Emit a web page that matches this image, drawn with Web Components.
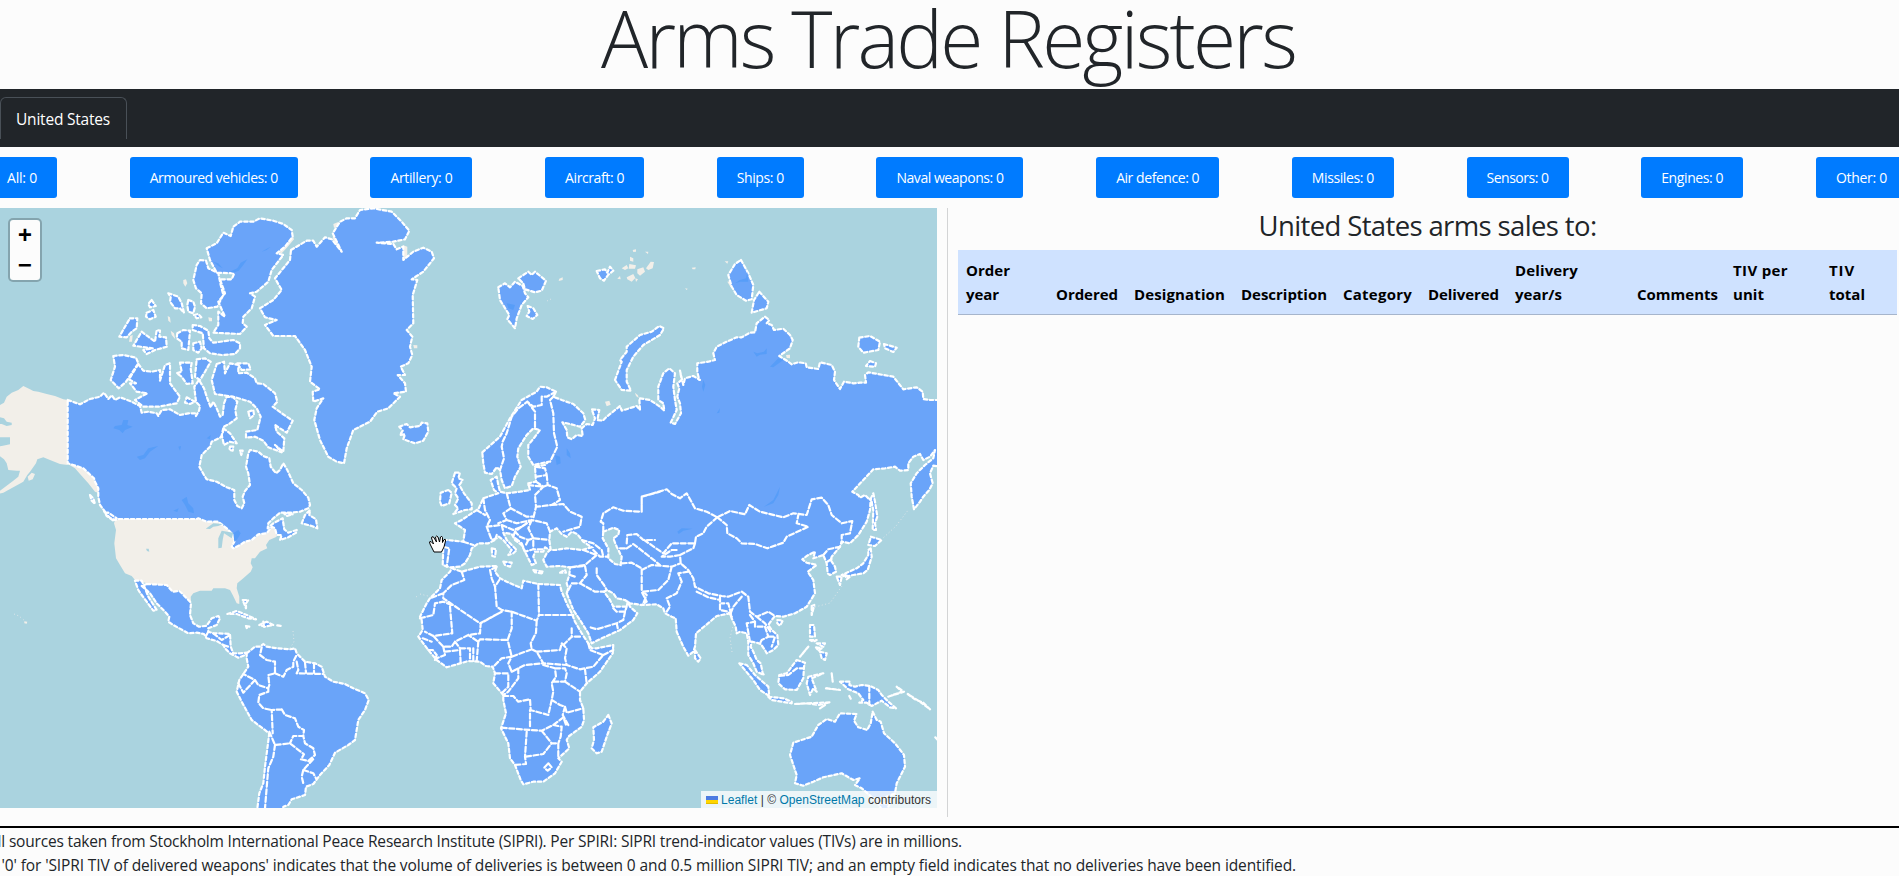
<!DOCTYPE html>
<html lang="en">
<head>
<meta charset="utf-8">
<title>Arms Trade Registers</title>
<style>
html,body{margin:0;height:100%;overflow:hidden;background:#fcfcfc}
body{font-family:"Open Sans","Noto Sans",sans-serif;font-size:16px;line-height:24px;color:#212529}
</style>
</head>
<body>
<arms-app></arms-app>
<script>
const define=(name,html,setup)=>customElements.define(name,class extends HTMLElement{
  constructor(){super();this.attachShadow({mode:'open'}).innerHTML=html;}
  connectedCallback(){if(setup)setup.call(this,this.shadowRoot);}
});

/* One line of text tracked out (or in) to the width given in "w". */
define('fit-text','<style>:host{display:inline-block;white-space:nowrap}span{display:inline-block}</style><span><slot></slot></span>',function(root){
  const s=root.querySelector('span'),w=+this.getAttribute('w'),n=this.textContent.length;
  const have=s.getBoundingClientRect().width;
  s.style.letterSpacing=((w-have)/n).toFixed(3)+'px';
});

define('nav-bar',`<style>:host{display:flex;height:58px;background:#212529;box-sizing:border-box;padding-top:8px}
.tab{box-sizing:border-box;width:127px;height:42px;border:1px solid #495057;border-bottom:0;border-radius:6px 6px 0 0;color:#fff;padding:8px 0 0 15px;font-size:15.5px;line-height:26px}</style>
<div class="tab"><slot></slot></div>`);

define('category-button',`<style>:host{display:block;box-sizing:border-box;height:41px;padding:8px 20px 0;border-radius:3px;background:#007bff;color:#fff;font-size:14px;line-height:26px}</style><slot></slot>`);

define('category-bar',`<style>:host{display:flex;justify-content:space-between;margin:10px -8px 10px -13px}</style><slot></slot>`);

define('zoom-control',`<style>:host{display:block;width:30px;border:2px solid rgba(0,0,0,.22);border-radius:5px;background:#fcfcfc;background-clip:padding-box;color:#000;font:bold 24px/33px "Liberation Mono",monospace;text-align:center}
div{height:30px}div:first-child{border-bottom:1px solid #ccc}</style><div>+</div><div>−</div>`);

define('map-attribution',`<style>:host{display:flex;align-items:center;box-sizing:border-box;height:17px;width:236px;padding-left:5px;background:rgba(255,255,255,.78);color:#333;font:12px/17px "Liberation Sans",Arial,sans-serif;white-space:nowrap}
a{color:#0078a8}svg{margin-right:3px}fit-text{padding-top:1px}</style><svg width="12" height="8"><path fill="#4c7be1" d="M0 0h12v4H0z"/><path fill="#ffd500" d="M0 4h12v3H0z"/><path fill="#e0bc00" d="M0 7h12v1H0z"/></svg><fit-text w="210"><a>Leaflet</a> | © <a>OpenStreetMap</a> contributors</fit-text>`);

/* Map sheets: letter = sheet origin; coordinates on a sheet are in thirds of a pixel. */
const SHEET={C:[0,200],D:[180,200],E:[400,200],F:[640,200],G:[0,480],H:[400,460],I:[400,600],J:[640,460],K:[640,640]};
const toPath=(line,close)=>{
  let o=[0,0],pts=[];
  for(const t of line.trim().split(/\s+/)){
    if(SHEET[t]){o=SHEET[t];continue;}
    const [x,y]=t.split(',').map(Number);
    pts.push((o[0]+x/3).toFixed(1)+' '+(o[1]+y/3).toFixed(1));
  }
  return 'M'+pts.join('L')+(close?'Z':'');
};
const paths=(text,close)=>text.trim().split('\n').map(l=>toPath(l,close)).join('');

const PLAIN=`
C 203,600 190,598 165,588 140,582 115,575 100,573 90,568 70,558 55,570 35,578 20,590 12,608 0,615 -5,650 12,655 20,665 35,668 35,675 20,678 5,672 -5,672 -5,712 30,712 30,733 5,738 -5,740 -5,765 12,778 20,790 25,810 50,812 60,812 55,830 40,842 0,872 -5,882 10,878 40,862 70,845 82,825 90,815 108,790 112,778 130,772 150,780 180,792 203,795
G 345,120 355,117 595,117 620,125 655,125 680,145 700,165 703,185 697,203 720,195 735,187 755,180 775,165 800,160 815,140 825,150 830,170 808,180 798,195 802,205 780,215 765,235 755,235 752,250 758,262 752,275 730,295 712,310 710,325 718,350 718,372 710,370 698,345 690,330 675,325 640,325 635,332 600,332 580,340 572,350 573,365 560,355 540,330 520,335 500,315 470,315 440,310 405,300 395,288 375,280 360,255 348,235 343,190 348,150 342,130
C 203,792 220,795 250,800 265,810 275,830 290,850 298,880 285,875 265,850 240,822 225,805
C 83,830 95,818 105,822 98,838 86,842
C 550,240 558,238 562,250 556,260 550,250
C 503,348 510,352 512,368 505,362
C 390,408 398,405 396,425 387,425
C 512,392 522,400 526,418 515,405
C 625,352 636,354 636,364 627,364
C 830,155 850,140 878,108 882,118 862,142 845,160
D 460,95 468,90 470,125 485,158 472,145 458,115
D 460,72 475,66 475,78 462,84
D 668,135 682,140 682,165 690,168 672,185
E 478,236 488,232 488,240 476,243
E 665,205 680,195 685,205 675,210
E 690,170 700,175 700,185 690,182
E 688,192 708,196 705,206 686,206
E 712,208 730,202 735,215 720,227 712,220
E 738,205 752,185 762,186 758,205 745,210
E 680,232 700,222 706,234 695,245 682,238
E 652,236 660,228 662,238
E 706,235 714,238 708,246
E 698,150 708,148 708,155 700,156
E 735,155 745,155 744,162
E 875,203 887,202 886,208 878,208
E 855,265 863,266 860,270
E 615,605 628,602 632,614 620,619
E 705,578 714,586 716,594 708,588
F 262,245 272,243 280,260 272,262
F 254,184 265,184 262,191
F 438,465 450,464 450,475 440,474
G 73,424 82,425 80,431 73,430
D 700,435 712,436 712,445 702,445`;

const LAND=`
C 203,600 240,613 270,597 300,590 312,578 325,597 335,586 345,600 360,592 390,603 420,618 425,638 445,635 470,640 475,648 485,630 510,628 540,645 565,640 585,640 588,648 597,632 600,618 588,605 585,580 583,560 597,540 612,565 620,590 632,622 640,605 650,625 660,650 668,645 672,610 680,590 700,592 712,605 706,630 710,655 690,670 672,680 668,700 662,712 635,725 630,740 605,765 598,800 612,825 620,838 650,845 680,862 703,870 G 703,60 712,78 725,85 733,70 728,50 735,33 750,15 C 745,820 738,800 745,760 750,750 775,755 790,768 808,775 812,800 828,820 840,810 850,790 862,810 880,850 905,870 925,893 G 930,75 925,85 900,95 870,98 840,98 820,115 805,130 803,145 820,130 848,115 850,130 853,148 865,158 890,150 888,158 865,172 840,180 845,165 830,165 825,145 815,140 800,160 775,163 755,180 735,185 720,195 700,205 695,200 703,185 700,165 680,145 655,125 620,125 595,115 590,117 358,117 345,120 330,113 310,92 315,95 300,75 295,50 295,25 285,5 C 282,835 250,805 220,795 203,790
C 340,468 370,465 408,473 415,490 395,520 378,545 356,565 332,540 345,500
C 415,492 430,512 455,515 480,510 480,542 495,495 510,490 510,550 540,590 530,610 475,620 430,620 405,600 442,580 410,575 390,550 408,550 387,538
C 540,488 575,488 572,505 578,550 560,552 545,530 530,520 545,515
C 590,478 615,475 632,485 615,515 600,540 585,530
C 560,592 575,600 585,605 570,612 555,608
C 650,492 672,485 675,520 690,490 715,495 715,520 740,518 765,535 770,550 790,552 825,580 832,605 818,620 845,640 878,662 860,698 825,675 830,695 853,715 850,755 825,735 845,757 805,742 790,722 765,710 738,713 738,695 772,690 782,650 770,625 750,605 700,590 645,582 635,540
C 712,490 745,490 752,508 725,510
C 745,635 760,630 762,645 750,655
C 670,685 690,700 710,730 690,725 672,735 665,705
C 690,740 700,740 698,752 688,750
C 720,752 728,752 724,765
C 390,355 412,355 410,385 395,395 380,412 358,410 375,380
C 455,300 467,318 450,322 445,312
C 440,338 460,330 467,350 450,358 438,350
C 425,395 445,410 465,425 470,390 480,392 478,410 498,412 500,440 465,450 440,462 430,450 458,445 400,437
C 505,280 535,290 545,310 552,338 540,325 525,325 510,305 512,292
C 565,300 580,305 585,320 580,340 565,335 562,315
C 582,345 595,342 604,352 590,355
C 532,400 550,390 570,392 565,450 545,445 545,425 530,415
C 580,430 600,425 605,445 595,458 580,450
C 578,375 600,378 625,392 628,415 640,428 700,420 720,430 720,445 705,462 665,465 630,460 612,445 608,400 578,390
C 600,180 618,182 625,205 655,220 662,255 670,285 652,320 620,325 603,310 605,280 588,265 580,240 590,195
C 620,145 650,130 670,98 692,108 700,80 720,65 760,65 780,55 820,62 850,72 875,90 878,110 855,140 830,160 850,165 815,210 805,245 770,275 750,280 765,290 755,325 730,350 728,370 740,380 720,402 640,398 655,375 655,335 675,350 655,305 675,280 660,238 695,238 703,220 650,218 630,180
D 333,150 380,122 400,122 410,140 435,112 455,118 485,155 458,100 480,65 500,55 525,55 540,30 580,25 635,35 665,65 688,92 675,118 640,125 590,128 640,132 650,148 670,140 670,180 700,155 730,143 755,155 762,175 730,215 695,238 712,240 698,285 700,370 680,390 697,410 690,440 697,465 685,490 662,500 675,525 653,525 675,550 678,575 640,580 660,590 625,625 592,635 570,665 520,690 500,745 492,790 470,785 445,770 420,720 403,660 410,625 430,595 400,605 398,575 420,568 390,545 395,500 375,450 345,408 280,408 255,375 290,360 255,352 240,325 280,300 305,270 285,235 330,180
D 658,680 680,672 690,682 720,678 725,668 742,670 745,695 730,722 705,730 670,718 675,703 660,705 668,692
E 295,262 315,250 330,262 345,245 368,258 375,280 385,292 365,315 350,355 345,385 322,358 328,345 300,300
E 355,235 385,215 395,225 405,215 438,242 425,272 405,277 375,268 370,250
E 383,318 400,325 412,345 398,357 380,348 388,335
E 590,213 615,208 622,218 630,200 640,212 625,224 612,242 600,235
E 645,540 665,485 660,480 680,455 680,440 720,405 755,395 778,378 792,385 780,405 730,435 700,470 680,510 680,545 693,572 665,570
E 247,757 300,710 330,655 365,600 410,575 420,560 440,562 468,575 460,590 485,600 520,612 550,640 556,660 540,680 510,672 487,667 500,690 502,712 515,718 530,705 548,708 545,685 560,672 578,675 585,655 575,628 598,630 592,660 608,662 620,650 660,618 665,632 710,618 720,630 718,595 750,600 780,620 793,632 790,610 775,600 775,560 790,520 808,505 825,520 820,560 825,600 830,630 812,668 825,672 843,640 840,610 832,590 838,565 832,550 845,540 840,512 850,555 855,535 880,528 900,540 F 178,540 172,515 172,490 205,485 225,480 220,460 230,440 260,425 290,412 305,412 330,398 345,397 350,370 375,350 388,360 380,370 395,375 402,390 430,386 450,405 458,420 450,445 418,468 445,485 455,493 475,487 497,490 500,502 535,507 540,487 575,495 585,515 582,540 600,567 612,545 640,550 660,548 678,548 675,525 685,517 730,525 760,530 790,568 830,562 848,575 850,597 870,600 905,600 905,800 880,797 870,820 878,850 868,870 850,890 J 840,125 822,148 815,110 812,70 830,40 855,15 F 880,775 885,750 870,770 850,780 840,762 820,770 805,790 805,810 780,812 765,800 735,805 700,808 670,840 637,875 655,885 660,893 675,885 690,900 J 692,115 690,150 680,185 655,225 630,250 605,245 600,260 575,290 572,300 585,320 588,335 570,345 563,340 560,310 550,285 535,290 520,295 525,275 505,285 487,298 500,308 530,315 503,335 520,360 525,400 500,440 465,460 430,470 405,468 395,480 385,495 395,510 412,525 415,555 400,570 380,580 375,570 362,552 350,548 335,545 332,560 340,575 K 350,60 362,70 368,100 372,105 350,95 340,70 325,45 325,20 J 325,545 320,520 300,515 290,520 287,500 275,475 270,460 245,465 230,468 210,485 168,520 165,560 160,575 145,587 130,560 110,515 107,475 95,470 75,460 70,445 50,433 5,435 H 690,430 675,420 650,415 640,400 620,390 612,395 630,420 640,440 655,440 680,440 683,425 690,440 712,460 700,480 660,510 605,535 I 575,130 565,100 540,60 520,30 H 500,400 505,385 500,370 508,345 510,322 480,318 440,320 430,300 440,280 450,270 435,262 430,275 405,275 400,290 408,310 395,315 385,295 375,275 365,255 345,240 335,222 310,218 320,240 350,270 340,280 325,285 335,270 310,240 290,225 285,240 265,250 235,250 215,265 210,285 195,310 180,320 150,322 128,315 130,260 115,245 140,240 190,245 195,210 165,190 185,180 215,160 235,148 250,115 270,108 295,100 282,90 272,60 290,50 295,75 300,95 320,100 360,95 390,90 385,70 408,65 405,20 435,15 E 445,785 400,795 385,770 385,735 405,710 420,690 400,685 380,705 355,745 352,770 362,800 345,830 335,858 315,865 305,840 300,810 290,802 275,822 255,818 250,790
H 155,325 185,335 240,320 290,318 285,335 300,355 320,365 365,385 370,362 415,372 480,375 485,395 500,430 I 515,40 525,65 545,100 565,130 575,145 590,145 640,135 638,160 600,215 560,250 540,275 540,300 550,325 552,360 545,380 505,410 500,420 508,445 475,475 485,485 465,520 430,545 400,545 370,553 362,540 345,495 330,475 325,430 303,385 318,340 310,300 310,285 280,250 285,220 278,200 258,198 240,185 205,183 140,202 110,180 85,150 70,130 55,110 68,90 65,60 60,50 80,10 H 90,415 120,385 125,360 150,335
I 625,345 635,370 622,405 605,455 590,460 575,445 582,420 580,382 610,365
H 165,38 180,38 175,55 188,60 178,75 192,100 215,130 215,148 195,150 160,162 175,145 165,135 175,115 165,100 170,85 155,70
H 145,90 155,98 148,130 125,138 120,125 122,98
H 275,265 288,268 285,290 277,288
H 310,305 335,308 330,320 315,315
H 400,330 430,335 425,340 405,337
H 480,338 495,330 498,338
G 440,312 500,315 518,335 538,332 560,355 573,368 570,405 580,430 597,440 620,437 635,415 655,408 660,415 650,435 625,445 625,455 640,460 655,460 690,462 692,500 700,520 720,520 740,518 735,525 715,533 690,520 675,505 670,495 650,483 620,475 612,462 590,458 565,460 520,435 505,425 508,410 495,395 470,370 450,340 425,318
G 405,302 425,302 435,325 445,350 470,390 460,392 440,365 425,345 415,330
G 740,520 765,500 780,500 790,492 800,500 830,505 870,508 885,505 890,520 915,545 945,550 965,560 975,590 1000,605 1035,612 1060,625 1095,640 1106,660 1095,690 1075,720 1065,780 1045,795 1005,818 988,855 960,885 940,912 918,920 915,945 875,958 865,975 850,980 850,1000 770,1000 778,940 790,910 795,860 808,760 755,720 725,665 710,635 718,600 745,560 740,535
G 905,130 915,105 930,90 928,105 948,118 952,145 935,138
G 682,402 710,393 740,405 768,418 745,415 710,402
G 778,435 800,425 820,435 795,440
G 738,438 748,440 740,444
G 832,436 844,438
G 728,360 745,360 738,370 738,385
G 270,45 280,55 285,72 275,62
G 315,98 325,98 350,115 340,122 320,108
G 850,98 878,103 860,108
J 700,100 705,125 712,170 705,190 708,210 698,210 700,150 693,115
J 693,230 725,240 705,258 685,255
J 692,265 695,290 683,330 670,340 640,345 615,350 605,345 650,325 670,310 685,285 685,270
J 590,350 605,350 600,375
J 615,345 630,350 620,358
J 515,438 523,435 515,465
J 412,480 428,482 420,497 412,490
J 510,495 522,495 525,530 510,530
J 510,540 530,540 520,545
J 530,550 555,550 550,560
J 528,562 545,565 535,572
J 540,575 560,580 555,600 545,595
J 505,560 480,590
J 165,570 182,595 175,605 165,595
K 298,70 320,75 345,105 385,140 388,168 360,150 340,120
K 385,170 430,175 455,185 455,190 395,180
K 470,60 495,68 492,80 490,115 470,150 435,148 415,130 418,105 440,100
K 505,110 550,100 515,115 530,155 520,145 510,165 500,130
K 465,192 500,190 535,195 570,187
K 540,205 555,195
K 575,100 578,125
K 558,145 600,150
K 628,168 632,176
K 600,125 630,125 628,135 645,140 665,135 690,138 715,150 725,165 745,185 768,205 750,202 725,182 695,198 680,188 658,188 670,180 655,160 625,148
K 745,170 785,155 770,140 792,155
K 803,162 825,178 850,188 870,208 840,185
K 698,215 710,240 722,245 732,280 765,310 792,345 795,380 770,430 765,460 730,475 700,475 665,445 645,435 660,415 640,420 605,400 550,412 520,425 490,437 465,430 470,405 450,345 460,308 515,290 535,255 560,237 585,245 600,220 650,222 642,242 655,262 682,270 692,250
K 715,490 750,490 740,510 725,510
K 886,292 893,300
F 303,180 325,220 340,255 335,298 318,302 290,285 275,260 265,225 285,192
F 358,275 385,305 380,325 335,338 342,300
F 658,413 690,408 720,425 715,450 670,458 655,440
F 732,432 770,443 760,456 735,445
F 690,483 708,490 705,500 678,498`;

const WATER=`
H 452,270 448,240 450,215 470,205 485,222 500,230 515,215 532,222 550,245 575,262 545,270 500,265 465,270
H 610,215 640,203 658,210 655,225 640,235 650,260 665,290 662,315 645,312 625,295 625,265 608,235`;

const LAKES=`
G 617,146 640,130 668,132 655,138 640,140 630,147
G 655,205 655,175 665,152 700,158 695,175 672,160 668,180 665,203
G 438,206 446,206 448,215 441,213`;

const DEEP=`
C 345,678 365,675 370,660 385,660 382,675 398,680 375,690 368,700 358,690 340,685
C 410,770 430,765 445,745 475,738 450,755 435,775 420,780
C 690,215 712,205 722,188 742,178 730,195 716,212 700,218
C 785,155 800,146 812,140 800,150
C 640,185 655,190 668,205 655,198
C 620,715 632,705 630,718
C 535,740 543,738 540,752
G 545,60 560,50 565,70 580,85 582,100 565,95 555,75
G 700,160 715,150 722,160 712,178 703,185
G 520,92 536,85 532,96
E 465,765 480,770 482,790 470,795
E 500,745 510,760 512,775 500,765
F 340,455 352,460 372,455 380,445 380,462 360,464 350,470
F 390,500 415,475 430,480 400,502
F 285,250 300,240 318,235 322,215 325,245 300,245
F 190,540 196,555 190,575 186,560
F 230,640 240,625 238,638
J 420,80 415,105 400,130 372,140 400,120
J 112,215 125,205 158,206 130,212 116,222
E 320,310 345,315 340,330 325,325`;

const BORDERS=`
E 468,575 440,590 425,590 425,615 400,620 382,605 355,625 335,650 320,700 308,725 305,740 312,775 300,810
E 382,605 405,635 405,685
E 460,590 450,600 460,640 462,700 472,740 450,785
H 405,20 435,25 440,45 410,50
H 440,45 443,75 470,85 480,120 455,135 410,140
H 385,75 430,80 443,75
H 408,65 430,80 405,105 408,140 400,175
H 455,135 490,132 510,155 545,170 540,200 490,215
H 320,100 332,145 380,170 400,170
H 332,145 310,160 320,180 295,190
H 320,180 350,190 395,180
H 250,115 255,150 270,180 260,200 275,240 290,235
H 230,150 255,165
H 260,200 305,195 340,210 365,200 395,180 440,190 450,215
H 365,200 345,215 360,230 385,240 400,235 448,240
H 345,215 340,230 365,250 375,275 400,268 430,268
H 385,240 375,260
H 395,180 385,205 400,235 400,268
H 305,195 310,215
H 130,260 148,265 140,320
H 190,245 220,255
H 545,240 580,250 605,270 610,290
H 550,270 590,285 555,315 510,322
H 580,270 600,290 625,290
H 660,265 680,265
H 610,215 610,190 602,185 610,160 640,142 670,152 725,155 725,110 780,95
J 5,150 5,110 40,100 80,88 95,102 120,115 140,100 165,145 200,155 232,172 270,153 315,163 328,135 360,155 430,172 460,160 500,165 515,118 545,113 565,135 575,165 605,190 637,183 630,220 605,225 605,250
J 232,172 260,195 262,220 290,235 305,250 345,252 382,265 430,248 440,230 505,200 470,190 475,165
J 232,172 200,200 190,220 168,230 165,250 95,250 70,280 5,235
J 165,250 160,265 120,285 122,310 145,330 160,355 165,380 205,400 245,408 265,410 305,395 325,410 330,455 350,470 385,455 405,468
J 120,285 90,290 65,290 95,270 110,270
H 680,250 682,225 710,222 730,240 765,240
H 680,265 700,252 730,275 780,315
J 5,330 35,315 95,320 122,310
J 95,320 85,360 55,390 5,395 20,425 5,435
H 665,310 695,308 725,325 725,390 740,405 730,430
J 145,335 115,340 125,365 110,400 80,415 90,440 80,455
J 170,395 205,412 240,420
J 240,410 240,450 265,455 275,470 265,430 245,430
J 305,410 280,440 270,465
J 330,465 345,485 320,490 330,545
J 345,485 345,500 375,500 385,530 365,540 360,550
J 385,530 405,530 395,560
J 350,470 375,490 395,520
J 550,285 565,268 600,260
J 562,305 578,295
K 688,138 688,195
K 418,108 445,105 470,85 490,85
H 510,322 555,318 560,345 540,370 515,370 500,400
H 540,370 585,395 612,395
H 590,325 590,345 612,375 620,390
H 510,345 525,350
H 640,445 650,455 675,455 680,440
H 675,455 670,480 650,490 590,508 565,500
H 650,490 655,512
I 520,45 417,45 410,62 335,35 305,30 290,20 H 285,380 298,360
H 415,372 417,465
H 290,320 270,330 275,355 285,380
H 185,335 193,360 155,375 130,400 130,415 240,490 305,455
H 130,400 90,415
H 155,435 130,425 105,430 100,465 60,475
I 150,20 157,100 100,108 75,95
I 305,35 242,70 240,100 205,105 165,125 155,140 130,140 100,108
I 335,35 335,85 323,120 240,118 235,125 205,105
I 410,62 408,98 392,130 395,148 335,170 323,120
I 395,148 410,155 430,190 375,195 335,215 325,190 335,170
I 335,170 305,175 280,200
I 410,155 480,150 485,130 500,145 495,175 500,195 430,190
I 515,85 515,110 490,135
I 540,110 515,110
I 565,130 570,150 610,165 580,200 540,208 500,195
I 610,165 640,150
I 555,208 560,250
I 465,205 495,205 500,220 495,245 460,245
I 495,245 540,275
I 430,195 465,205 468,230 455,250 460,275 455,300 480,315 495,320 500,338 550,325
I 455,300 445,345 410,335 390,330 390,380
I 310,288 340,288 355,305 390,298 392,330
I 285,220 325,220 325,260 305,280
I 335,215 355,205 355,235 325,275 310,285
I 305,383 390,390 425,392 460,375 490,352 500,380
I 495,320 488,345 505,375
I 380,395 375,470 378,492 345,495
I 378,470 430,462 455,430 475,430 475,475
I 425,392 455,430
I 460,375 485,380 482,410 475,430
I 445,490 455,502 443,512 433,503 445,490
I 68,115 95,125
I 85,150 98,150 110,165 105,180
I 130,140 135,165 110,175
I 135,155 180,150 182,190
I 180,145 210,145 210,183
I 165,125 180,145
I 220,145 220,183
I 235,125 230,183
G 785,502 780,525 800,540 825,545 825,580 805,585 808,615 805,625 775,615 765,600 730,582
G 825,580 850,590 860,570 880,560 880,545 890,525
G 715,610 730,638 765,600
G 805,625 805,635 778,645 775,668 790,685 815,690
G 845,688 815,690 818,760
G 845,688 855,705 885,715 895,740 912,750 910,768 880,768 870,790
G 808,755 825,795 870,790 912,823 903,838 925,843 945,825 940,805 915,790 910,768
G 825,795 820,830 805,865 802,900 795,985
G 925,843 942,835 910,870 905,890 910,910
G 910,870 940,880 948,895
G 890,545 895,570 890,580 970,582
G 915,548 918,578
G 942,550 942,578
G 790,425 792,440
G 625,455 618,468
G 640,460 665,480 690,465
G 670,495 685,500`;

define('world-map',`<style>:host{display:grid;width:937px;height:600px;overflow:hidden}
svg,.over{grid-area:1/1}svg{display:block}
.over{display:flex;flex-direction:column;justify-content:space-between;padding:10px 0 0 8px;z-index:1}
zoom-control{align-self:flex-start}map-attribution{align-self:flex-end}
.land{fill:#6aa4f9;stroke:#fff;stroke-width:2.2;stroke-dasharray:3.4 2.6;stroke-linecap:round;stroke-linejoin:round}
.plain{fill:#f2efe9}.sea{fill:#aad3df;stroke:#fff;stroke-width:2.2;stroke-dasharray:3.4 2.6;stroke-linecap:round}.lake{fill:#aad3df}
.deep{fill:#579df8;stroke:none}.line{fill:none;stroke-dasharray:5 2.6;stroke-width:2.2}</style>
<svg width="937" height="600" viewBox="0 208 937 600"><rect y="208" width="937" height="600" fill="#aad3df"/>
<path class="plain"/><path class="land"/><path class="land line"/><path class="sea"/><path class="lake"/><path class="deep"/>
<path fill="none" stroke="#dde6ea" stroke-width="1" stroke-dasharray="1 2.5" d="M881 540l15-14 13-17M815 607l15-4 12-17M732 652l-2-14 3-12M293 631l1 11-4 6M14 614l5 2 6 5M420 594l8 2M416 597l3-2M551 299l-6 3"/>
<path d="M434 552l-4-8q-1.500-3 1-2.500l2.500 2.500-2-6q0-2 2-1l3 5-1-5q1-2 2.500 0l1.500 5 1-5q1.500-1.500 2 .5v5l1.500-3q2-1 1.500 1.500l-1.500 6-2.500 5z" fill="#fcfcfc" stroke="#000"/></svg>
<div class="over"><zoom-control></zoom-control><map-attribution></map-attribution></div>`,function(root){
  const set=(q,d)=>root.querySelector(q).setAttribute('d',d);
  set('.plain',paths(PLAIN,true));
  set('.land',paths(LAND,true));
  set('.line',paths(BORDERS,false));
  set('.sea',paths(WATER,true));
  set('.lake',paths(LAKES,true));
  set('.deep',paths(DEEP,true));
});

define('sales-table',`<style>:host{display:block;width:939px}
h3{margin:0;height:42px;text-align:center;font-weight:400;font-size:27.500px;line-height:35px}
.head{display:grid;grid-template-columns:90px 78px 107px 102px 85px 87px 122px 96px 96px 76px;align-items:end;box-sizing:border-box;height:65px;padding-bottom:8px;background:#cfe2ff;border-bottom:1px solid #a6b5cc;color:#000;font-weight:700;font-size:15px}
.head div{padding-left:8px}</style>
<h3><fit-text w="338">United States arms sales to:</fit-text></h3>
<div class="head"><div><fit-text w="44">Order</fit-text><br><fit-text w="33">year</fit-text></div><div><fit-text w="62">Ordered</fit-text></div><div><fit-text w="91">Designation</fit-text></div><div><fit-text w="86">Description</fit-text></div><div><fit-text w="69">Category</fit-text></div><div><fit-text w="71">Delivered</fit-text></div><div><fit-text w="63">Delivery</fit-text><br><fit-text w="47">year/s</fit-text></div><div><fit-text w="81">Comments</fit-text></div><div><fit-text w="55">TIV per</fit-text><br><fit-text w="31">unit</fit-text></div><div><fit-text w="26">TIV</fit-text><br><fit-text w="36">total</fit-text></div></div>`);

define('page-footer',`<style>:host{display:block;border-top:2px solid #000;margin-top:9px;padding-top:1px}
p{margin:0 0 0 -12px;font-size:15.500px;line-height:24px}</style>
<p><fit-text w="974">All sources taken from Stockholm International Peace Research Institute (SIPRI). Per SPIRI: SIPRI trend-indicator values (TIVs) are in millions.</fit-text></p>
<p><fit-text w="1308">A '0' for 'SIPRI TIV of delivered weapons' indicates that the volume of deliveries is between 0 and 0.5 million SIPRI TIV; and an empty field indicates that no deliveries have been identified.</fit-text></p>`);

const cats=[['All: 0',30],['Armoured vehicles: 0',128],['Artillery: 0',62],['Aircraft: 0',59],['Ships: 0',47],['Naval weapons: 0',107],['Air defence: 0',83],['Missiles: 0',62],['Sensors: 0',62],['Engines: 0',62],['Other: 0',51]];
define('arms-app',`<style>:host{display:block;width:1899px;height:876px;overflow:hidden}
h1{margin:0 3px 0 0;height:89px;text-align:center;font-weight:300;font-size:78.500px;line-height:76px;color:#212529}
main{display:flex;height:609px}.rule{width:1px;height:609px;background:#d3d4d5;margin:0 10px}</style>
<h1><fit-text w="694">Arms Trade Registers</fit-text></h1>
<nav-bar><fit-text w="94">United States</fit-text></nav-bar>
<category-bar>${cats.map(c=>`<category-button><fit-text w="${c[1]}">${c[0]}</fit-text></category-button>`).join('')}</category-bar>
<main><world-map></world-map><div class="rule"></div><sales-table></sales-table></main>
<page-footer></page-footer>`);
</script>
</body>
</html>
